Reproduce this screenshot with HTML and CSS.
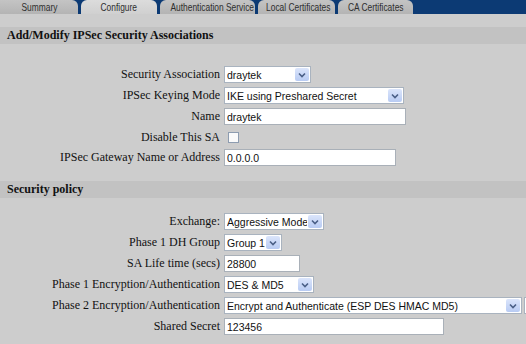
FILE: index.html
```html
<!DOCTYPE html>
<html lang="en">
<head>
    <meta charset="UTF-8">
    <title>IPSec Configure</title>
    <link rel="stylesheet" href="styles.css">
</head>
<body>
    <div class="tabs">
        <div class="tab tab-summary"><span>Summary</span></div>
        <div class="tab tab-configure active"><span>Configure</span></div>
        <div class="tab tab-auth"><span>Authentication Service</span></div>
        <div class="tab tab-local"><span>Local Certificates</span></div>
        <div class="tab tab-ca"><span>CA Certificates</span></div>
    </div>

    <h2 class="section first">Add/Modify IPSec Security Associations</h2>
    <div class="form form-sa">
        <label>Security Association</label>
        <div class="sel w-sa"><select><option>draytek</option></select><span class="arrow"><svg viewBox="0 0 8 6" width="8" height="6"><path d="M1 1.5 L4 4.5 L7 1.5" fill="none" stroke="#4a5f86" stroke-width="1.6"/></svg></span></div>

        <label>IPSec Keying Mode</label>
        <div class="sel w-keying"><select><option>IKE using Preshared Secret</option></select><span class="arrow"><svg viewBox="0 0 8 6" width="8" height="6"><path d="M1 1.5 L4 4.5 L7 1.5" fill="none" stroke="#4a5f86" stroke-width="1.6"/></svg></span></div>

        <label>Name</label>
        <div><input type="text" class="txt w-name" value="draytek"></div>

        <label>Disable This SA</label>
        <div><input type="checkbox" class="chk"></div>

        <label>IPSec Gateway Name or Address</label>
        <div><input type="text" class="txt w-gateway" value="0.0.0.0"></div>
    </div>

    <h2 class="section">Security policy</h2>
    <div class="form form-policy">
        <label>Exchange:</label>
        <div class="sel w-exchange"><select><option>Aggressive Mode</option></select><span class="arrow"><svg viewBox="0 0 8 6" width="8" height="6"><path d="M1 1.5 L4 4.5 L7 1.5" fill="none" stroke="#4a5f86" stroke-width="1.6"/></svg></span></div>

        <label>Phase 1 DH Group</label>
        <div class="sel w-dh"><select><option>Group 1</option></select><span class="arrow"><svg viewBox="0 0 8 6" width="8" height="6"><path d="M1 1.5 L4 4.5 L7 1.5" fill="none" stroke="#4a5f86" stroke-width="1.6"/></svg></span></div>

        <label>SA Life time (secs)</label>
        <div><input type="text" class="txt w-life" value="28800"></div>

        <label>Phase 1 Encryption/Authentication</label>
        <div class="sel w-p1"><select><option>DES &amp; MD5</option></select><span class="arrow"><svg viewBox="0 0 8 6" width="8" height="6"><path d="M1 1.5 L4 4.5 L7 1.5" fill="none" stroke="#4a5f86" stroke-width="1.6"/></svg></span></div>

        <label>Phase 2 Encryption/Authentication</label>
        <div class="row-p2">
            <div class="sel w-p2"><select><option>Encrypt and Authenticate (ESP DES HMAC MD5)</option></select><span class="arrow"><svg viewBox="0 0 8 6" width="8" height="6"><path d="M1 1.5 L4 4.5 L7 1.5" fill="none" stroke="#4a5f86" stroke-width="1.6"/></svg></span></div>
            <span class="cut"></span>
        </div>

        <label>Shared Secret</label>
        <div><input type="text" class="txt w-secret" value="123456"></div>
    </div>
</body>
</html>
```

FILE: styles.css
```css
body {
    margin: 0;
    background-color: #cdcdcd;
    font-family: "Liberation Serif", "Times New Roman", serif;
    font-size: 12px;
    color: #111;
    overflow: hidden;
}

/* tab strip along the top */
.tabs {
    display: flex;
    height: 14px;
    background-color: #0c3a74;
}
.tab {
    height: 14px;
    line-height: 14px;
    text-align: center;
    white-space: nowrap;
    overflow: hidden;
    font-family: "Liberation Sans", Arial, sans-serif;
    font-size: 10.5px;
    color: #2e2e2e;
    background: linear-gradient(#c4c4c4, #b4b4b4);
    border-radius: 6px 6px 0 0;
    margin-right: 3px;
}
.tab span {
    display: inline-block;
    transform: scaleX(0.8); /* narrow face like the original */
}
.tab.active {
    background: linear-gradient(#dcdcdc, #d0d0d0);
}
.tab-summary { width: 78px; border-top-left-radius: 0; }
.tab-configure { width: 76px; }
.tab-auth { width: 95px; }
.tab-local { width: 77px; }
.tab-ca { width: 75px; }

/* section header bands */
.section {
    margin: 13px 0 0;
    height: 17px;
    line-height: 17px;
    padding-left: 7px;
    font-size: 12px;
    font-weight: bold;
    background-color: #c2c2c2;
}

/* label / control grid */
.form {
    display: grid;
    grid-template-columns: 220px 1fr;
    grid-auto-rows: 21px;
    column-gap: 4px;
    align-items: center;
}
.form-sa {
    padding-top: 20px;
    grid-template-rows: 21px 21px 21px 20px 21px;
}
.form-policy {
    padding-top: 13px;
}
.form label {
    text-align: right;
    white-space: nowrap;
}
.form > div {
    display: flex;
    align-items: center;
}

/* text inputs */
.txt {
    height: 17px;
    box-sizing: border-box;
    border: 1px solid #a9b0b8;
    background-color: #fff;
    padding: 0 2px;
    margin: 0;
    font-family: "Liberation Sans", Arial, sans-serif;
    font-size: 10.5px;
    color: #111;
    outline: none;
}

/* dropdowns with XP style arrow button */
.sel {
    position: relative;
    height: 17px;
}
.sel select {
    appearance: none;
    -webkit-appearance: none;
    width: 100%;
    height: 17px;
    box-sizing: border-box;
    border: 1px solid #a9b3bf;
    background-color: #fff;
    padding: 0 16px 0 2px;
    margin: 0;
    font-family: "Liberation Sans", Arial, sans-serif;
    font-size: 10.5px;
    color: #111;
    outline: none;
}
.sel .arrow {
    position: absolute;
    right: 2px;
    top: 2px;
    width: 14px;
    height: 13px;
    border-radius: 2px;
    background: linear-gradient(#dbe5fb, #b8cbf3);
    display: flex;
    align-items: center;
    justify-content: center;
}

.chk {
    appearance: none;
    -webkit-appearance: none;
    width: 11px;
    height: 11px;
    margin: 0 0 0 4px;
    border: 1px solid #8d9cb0;
    background-color: #fafafa;
}

.row-p2 {
    gap: 2px;
}
.cut {
    width: 4px;
    height: 17px;
    box-sizing: border-box;
    border: 1px solid #a9b3bf;
    border-right: none;
    background-color: #fff;
}

.w-sa { width: 87px; }
.w-keying { width: 180px; }
.w-name { width: 182px; }
.w-gateway { width: 172px; }
.w-exchange { width: 100px; }
.w-dh { width: 58px; }
.w-life { width: 76px; }
.w-p1 { width: 90px; }
.w-p2 { width: 298px; flex-shrink: 0; }
.w-secret { width: 220px; }
```
